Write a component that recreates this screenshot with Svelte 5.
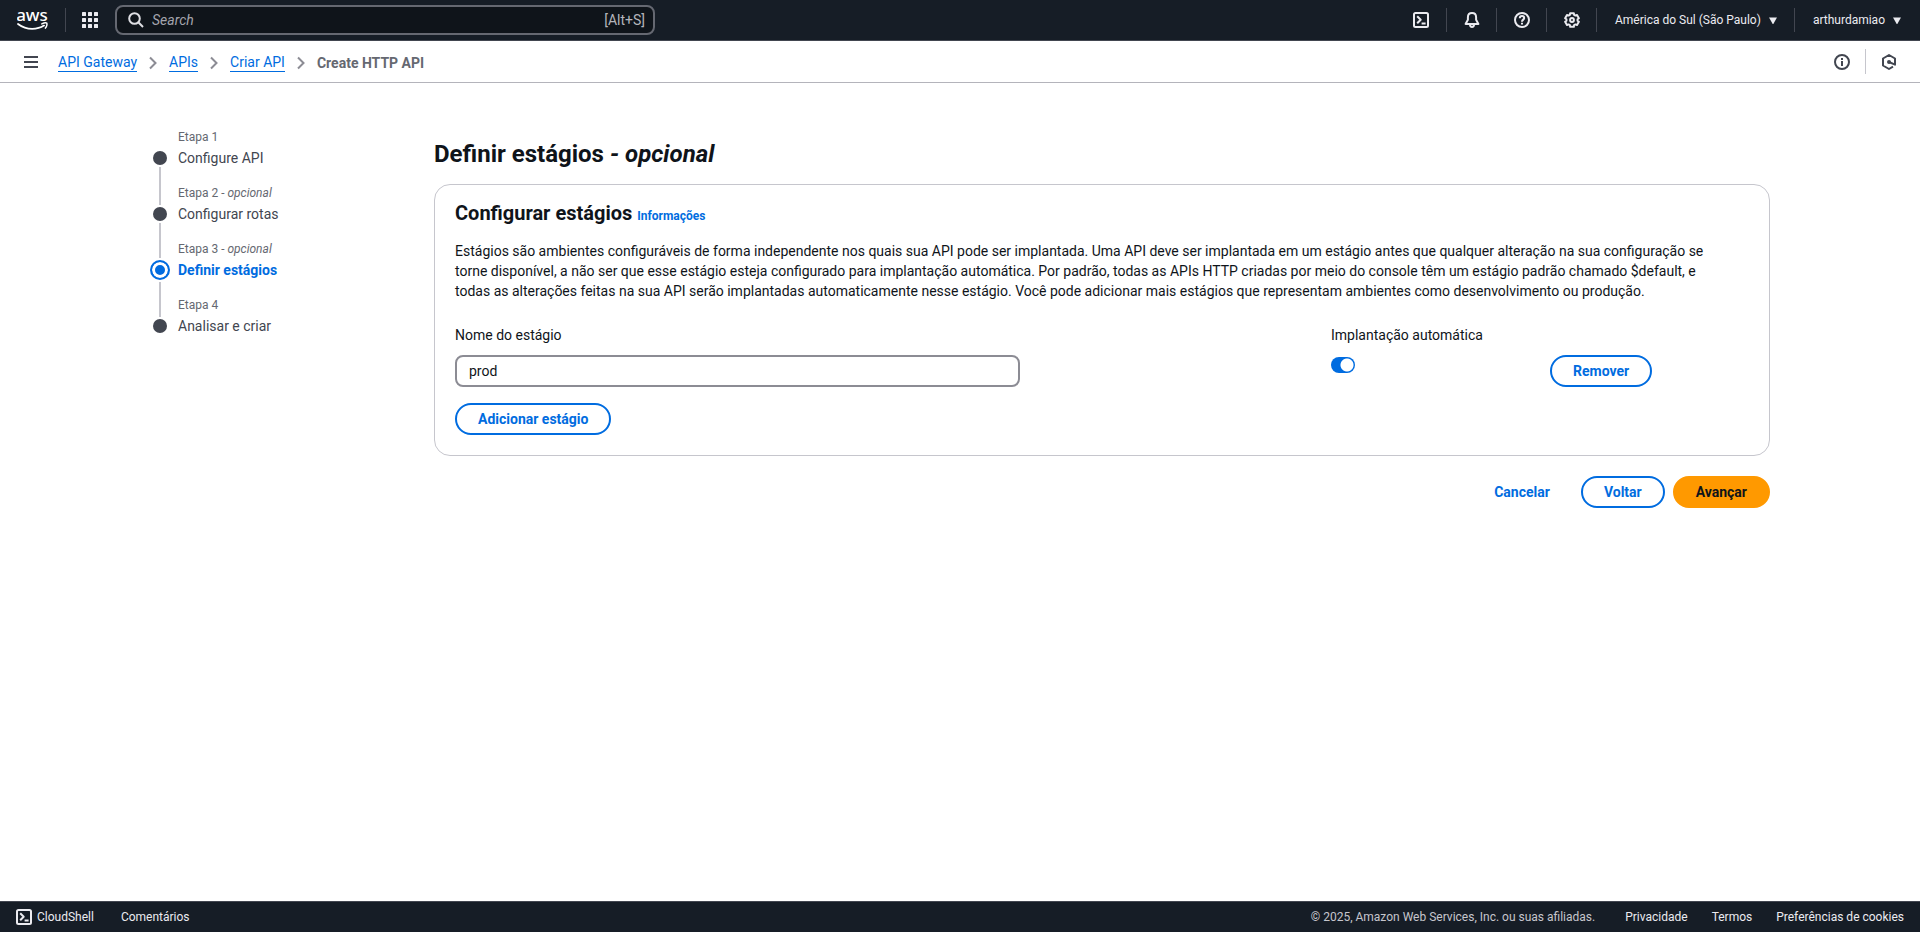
<script>
  const crumbs = ['API Gateway', 'APIs', 'Criar API'];
  const steps = [
    { title: 'Configure API' },
    { title: 'Configurar rotas', optional: true },
    { title: 'Definir estágios', optional: true, active: true },
    { title: 'Analisar e criar' }
  ];

  let stageName = $state('prod');
  let autoDeploy = $state(true);

  // Six-toothed gear outline, centred in a 16px box.
  const polar = (deg, r) => {
    const a = (deg * Math.PI) / 180;
    return `${(8 + r * Math.cos(a)).toFixed(2)} ${(8 + r * Math.sin(a)).toFixed(2)}`;
  };
  const gear =
    'M' +
    [0, 1, 2, 3, 4, 5]
      .map((i) => 30 + i * 60)
      .flatMap((c) => [polar(c - 22, 5.6), polar(c - 15, 7.1), polar(c + 15, 7.1), polar(c + 22, 5.6)])
      .join('L') +
    'Z';
</script>

{#snippet terminal()}
  <svg class="icon" viewBox="0 0 16 16" aria-hidden="true">
    <rect x="1" y="1" width="14" height="14" rx="1.5" />
    <path d="M4.2 4.3 7.7 7.8 4.2 11.3M8.6 11.5h4" />
  </svg>
{/snippet}

{#snippet caret()}
  <svg class="caret" viewBox="0 0 8 7" aria-hidden="true"><path d="M0 .5h8L4.6 6.4a.7.7 0 0 1-1.2 0z" /></svg>
{/snippet}

<div class="page">
  <header class="topbar">
    <a class="logo" href="#home" aria-label="aws">
      <svg viewBox="0 0 32 32" aria-hidden="true">
        <text x="15" y="17" text-anchor="middle">aws</text>
        <path d="M1 20c4.200 3.200 9 4.900 14.200 4.900 4.200 0 8.600-1.200 11.800-3.300" fill="none" stroke="#fff" stroke-width="1.800" stroke-linecap="round" />
        <path d="M24.800 19.900c2-1 4.400-1.200 5-.7.500.8 0 3.300-1.400 4.900" fill="none" stroke="#fff" stroke-width="1.500" stroke-linecap="round" stroke-linejoin="round" />
      </svg>
    </a>
    <button class="apps" type="button" aria-label="Serviços">
      <svg viewBox="0 0 16 16" aria-hidden="true">
        {#each [0, 6, 12] as y}
          {#each [0, 6, 12] as x}
            <rect {x} {y} width="4" height="4" rx="0.5" />
          {/each}
        {/each}
      </svg>
    </button>
    <div class="search">
      <svg class="icon" viewBox="0 0 16 16" aria-hidden="true">
        <circle cx="6.500" cy="6.500" r="5.300" /><path d="m10.300 10.300 4.700 4.700" />
      </svg>
      <input type="text" placeholder="Search" aria-label="Search" />
      <span>[Alt+S]</span>
    </div>
    <nav class="tools" aria-label="Conta">
      <button class="tool" type="button" aria-label="CloudShell">{@render terminal()}</button>
      <button class="tool" type="button" aria-label="Notificações">
        <svg class="icon" viewBox="0 0 16 16" aria-hidden="true">
          <path d="M8 1C5.300 1 3.900 3 3.900 5.200v2.600L1.600 11.900h12.800l-2.300-4.100V5.200C12.100 3 10.700 1 8 1z" />
          <path d="M6 12.500c0 3.200 4 3.200 4 0" />
        </svg>
      </button>
      <button class="tool" type="button" aria-label="Ajuda">
        <svg class="icon" viewBox="0 0 16 16" aria-hidden="true">
          <circle cx="8" cy="8" r="7" />
          <path d="M5.800 6.200C5.800 4.900 6.700 4 8 4s2.200.8 2.200 2c0 1.600-2.200 1.700-2.200 3.700M8 10.800v1.700" />
        </svg>
      </button>
      <button class="tool" type="button" aria-label="Configurações">
        <svg class="icon" viewBox="0 0 16 16" aria-hidden="true">
          <path d={gear} /><circle cx="8" cy="8" r="1.900" />
        </svg>
      </button>
      <button class="account" type="button">América do Sul (São Paulo){@render caret()}</button>
      <button class="account" type="button">arthurdamiao{@render caret()}</button>
    </nav>
  </header>

  <div class="crumbbar">
    <button class="menu" type="button" aria-label="Menu">
      <svg viewBox="0 0 14 12" aria-hidden="true"><path d="M0 1h14M0 6h14M0 11h14" /></svg>
    </button>
    <nav class="crumbs" aria-label="Navegação estrutural">
      {#each crumbs as crumb}
        <a href="#crumb">{crumb}</a>
        <svg viewBox="0 0 8 14" aria-hidden="true"><path d="m1 1.500 5.500 5.500L1 12.500" /></svg>
      {/each}
      <strong>Create HTTP API</strong>
    </nav>
    <div class="panels">
      <button type="button" aria-label="Informações">
        <svg class="icon" viewBox="0 0 16 16" aria-hidden="true">
          <circle cx="8" cy="8" r="7" /><path d="M8 4v2M8 7v5" />
        </svg>
      </button>
      <button type="button" aria-label="Recursos">
        <svg class="icon" viewBox="0 0 16 16" aria-hidden="true">
          <path d="M12 12.700 8 15 2 11.500v-7L8 1l6 3.500v6.200L8 8" />
          <circle cx="8" cy="8" r="1" />
        </svg>
      </button>
    </div>
  </div>

  <main class="wizard">
    <nav class="steps" aria-label="Etapas">
      <ol>
        {#each steps as step, i}
          <li class:active={step.active}>
            <span class="rail"><span class="line"></span><span class="dot"></span><span class="line"></span></span>
            <div>
              <small>Etapa {i + 1}{#if step.optional}<em>&nbsp;- opcional</em>{/if}</small>
              <a href="#step" aria-current={step.active ? 'step' : undefined}>{step.title}</a>
            </div>
          </li>
        {/each}
      </ol>
    </nav>

    <form class="content" onsubmit={(e) => e.preventDefault()}>
      <h1>Definir estágios <em>- opcional</em></h1>
      <section class="card">
        <h2>Configurar estágios <a href="#info">Informações</a></h2>
        <p>
          Estágios são ambientes configuráveis de forma independente nos quais sua API pode ser implantada. Uma API deve
          ser implantada em um estágio antes que qualquer alteração na sua configuração se torne disponível, a não ser que
          esse estágio esteja configurado para implantação automática. Por padrão, todas as APIs HTTP criadas por meio do
          console têm um estágio padrão chamado $default, e todas as alterações feitas na sua API serão implantadas
          automaticamente nesse estágio. Você pode adicionar mais estágios que representam ambientes como desenvolvimento
          ou produção.
        </p>
        <div class="row">
          <div class="field name">
            <label for="stage">Nome do estágio</label>
            <input id="stage" type="text" bind:value={stageName} />
          </div>
          <div class="field">
            <label for="auto">Implantação automática</label>
            <input id="auto" class="switch" type="checkbox" role="switch" bind:checked={autoDeploy} />
          </div>
          <div class="remove"><button class="btn" type="button">Remover</button></div>
        </div>
        <button class="btn" type="button">Adicionar estágio</button>
      </section>
      <div class="actions">
        <button class="btn link" type="button">Cancelar</button>
        <button class="btn" type="button">Voltar</button>
        <button class="btn primary" type="submit">Avançar</button>
      </div>
    </form>
  </main>

  <footer>
    <button class="shell" type="button">{@render terminal()}CloudShell</button>
    <a href="#feedback">Comentários</a>
    <span class="legal">© 2025, Amazon Web Services, Inc. ou suas afiliadas.</span>
    <a href="#privacy">Privacidade</a>
    <a href="#terms">Termos</a>
    <a href="#cookies">Preferências de cookies</a>
  </footer>
</div>

<style>
  :global(body) {
    margin: 0;
    background: #fff;
  }
  .page {
    display: flex;
    flex-direction: column;
    min-height: 100vh;
    font: 14px/20px Roboto, "Noto Sans", sans-serif;
    color: #0f141a;
  }
  .page * {
    box-sizing: border-box;
  }
  button,
  input {
    font: inherit;
    color: inherit;
    margin: 0;
  }
  button {
    background: none;
    border: 0;
    padding: 0;
    cursor: pointer;
  }
  a {
    color: inherit;
    text-decoration: none;
  }
  svg {
    display: block;
    flex: none;
  }
  .icon {
    width: 16px;
    height: 16px;
    fill: none;
    stroke: currentColor;
    stroke-width: 2;
    stroke-linejoin: round;
  }

  .topbar {
    display: flex;
    align-items: center;
    height: 41px;
    padding: 0 19px 0 17px;
    background: #161d26;
    border-bottom: 1px solid #424650;
    color: #ebebf0;
    font-size: 12px;
  }
  .logo {
    display: flex;
    align-items: center;
    height: 24px;
    padding-right: 16px;
    border-right: 1px solid #424650;
  }
  .logo svg {
    width: 32px;
    height: 32px;
  }
  .logo text {
    font: 500 17px "Noto Sans", sans-serif;
    fill: #fff;
  }
  .apps {
    padding: 0 17px 0 16px;
  }
  .apps svg {
    width: 16px;
    height: 16px;
    fill: #ebebf0;
  }
  .search {
    display: flex;
    align-items: center;
    gap: 8px;
    flex: 0 1 540px;
    height: 30px;
    padding: 0 8px 0 11px;
    border: 2px solid #656871;
    border-radius: 8px;
    background: #0f141a;
    color: #b4b4bb;
    font-size: 14px;
  }
  .search .icon {
    color: #dedee3;
  }
  .search input {
    flex: 1;
    min-width: 0;
    padding: 0;
    border: 0;
    outline: 0;
    background: none;
  }
  .search input::placeholder {
    color: #a4a4ad;
    font-style: italic;
    opacity: 1;
  }
  .tools {
    display: flex;
    align-items: center;
    margin-left: auto;
  }
  .tools button {
    display: flex;
    align-items: center;
    justify-content: center;
    height: 24px;
  }
  .tools button + button {
    border-left: 1px solid #424650;
  }
  .tool {
    width: 50px;
  }
  .account {
    gap: 8px;
    padding: 0 17px 0 18px;
  }
  .account:last-child {
    padding-right: 0;
  }
  .caret {
    width: 8px;
    height: 7px;
    fill: currentColor;
  }

  .crumbbar {
    display: flex;
    align-items: center;
    gap: 20px;
    height: 42px;
    padding: 0 23px 0 24px;
    border-bottom: 1px solid #b4b4bb;
    color: #424650;
  }
  .menu svg {
    width: 14px;
    height: 12px;
    stroke: currentColor;
    stroke-width: 2;
  }
  .crumbs {
    display: flex;
    align-items: center;
    gap: 12px;
    padding-top: 2px;
  }
  .crumbs a {
    color: #006ce0;
    line-height: 18px;
    border-bottom: 1px solid;
  }
  .crumbs svg {
    width: 8px;
    height: 14px;
    fill: none;
    stroke: #8c8c94;
    stroke-width: 2;
  }
  .crumbs strong {
    color: #656871;
  }
  .panels {
    display: flex;
    margin-left: auto;
  }
  .panels button {
    display: flex;
    align-items: center;
    height: 25px;
    padding-left: 15px;
  }
  .panels button:first-child {
    padding-right: 15px;
    border-right: 1px solid #c6c6cd;
  }

  .wizard {
    display: flex;
    flex: 1;
    align-items: flex-start;
    width: 100%;
    max-width: 1620px;
    margin: 0 auto;
    padding: 46px 0 40px;
  }
  .steps {
    flex: 0 0 284px;
  }
  ol {
    list-style: none;
    margin: 0;
    padding: 0;
  }
  li {
    display: flex;
    gap: 8px;
    height: 56px;
    color: #424650;
  }
  .rail {
    display: flex;
    flex-direction: column;
    align-items: center;
    gap: 2px;
    width: 20px;
  }
  .line {
    width: 2px;
    height: 20px;
    background: #c6c6cd;
  }
  .line:last-child {
    flex: 1;
  }
  li:first-child .line:first-child,
  li:last-child .line:last-child {
    visibility: hidden;
  }
  .dot {
    width: 14px;
    height: 14px;
    border-radius: 50%;
    background: #424650;
  }
  .active .line:first-child {
    height: 17px;
  }
  .active .dot {
    width: 20px;
    height: 20px;
    border: 2px solid #006ce0;
    background: #006ce0;
    box-shadow: inset 0 0 0 3px #fff;
  }
  small {
    display: block;
    font-size: 12px;
    line-height: 16px;
    color: #656871;
  }
  li a {
    display: block;
    line-height: 26px;
  }
  .active a {
    color: #006ce0;
    font-weight: 700;
  }

  .content {
    flex: 1;
    min-width: 0;
  }
  h1 {
    margin: 10px 0 15px;
    font-size: 24px;
    line-height: 30px;
    font-weight: 700;
  }
  h2 {
    margin: 0;
    font-size: 20px;
    line-height: 24px;
    font-weight: 700;
  }
  h2 a {
    font-size: 12px;
    color: #006ce0;
  }
  .card {
    padding: 16px 20px 20px;
    border: 1px solid #c6c6cd;
    border-radius: 16px;
  }
  p {
    margin: 13px 0 24px;
    padding-right: 16px;
  }
  .row {
    display: grid;
    grid-template-columns: repeat(6, 1fr);
    gap: 20px;
    margin-bottom: 16px;
  }
  .name {
    grid-column: span 4;
  }
  .field {
    display: flex;
    flex-direction: column;
    align-items: flex-start;
    gap: 10px;
    white-space: nowrap;
  }
  .name input {
    width: 66%;
    height: 32px;
    padding: 0 12px;
    border: 2px solid #8c8c94;
    border-radius: 8px;
    background: #fff;
  }
  .switch {
    appearance: none;
    width: 24px;
    height: 16px;
    margin: 2px 0 0;
    border-radius: 8px;
    background: radial-gradient(circle at 16px 8px, #fff 6px, transparent 7px) #006ce0;
  }
  .switch:not(:checked) {
    background: radial-gradient(circle at 8px 8px, #fff 6px, transparent 7px) #8c8c94;
  }
  .remove {
    align-self: end;
  }
  .btn {
    height: 32px;
    padding: 0 21px;
    border: 2px solid #006ce0;
    border-radius: 16px;
    color: #006ce0;
    font-weight: 700;
  }
  .actions {
    display: flex;
    justify-content: flex-end;
    gap: 8px;
    margin-top: 20px;
  }
  .link {
    border-color: transparent;
  }
  .primary {
    border-color: #f90;
    background: #f90;
    color: #0f141a;
  }

  footer {
    display: flex;
    align-items: center;
    height: 31px;
    padding: 0 16px;
    gap: 24px;
    border-top: 1px solid #424650;
    background: #161d26;
    color: #ebebf0;
    font-size: 12px;
  }
  .shell {
    display: flex;
    align-items: center;
    gap: 5px;
    margin-right: 3px;
  }
  .legal {
    margin: 0 6px 0 auto;
    color: #c6c6cd;
  }
</style>
